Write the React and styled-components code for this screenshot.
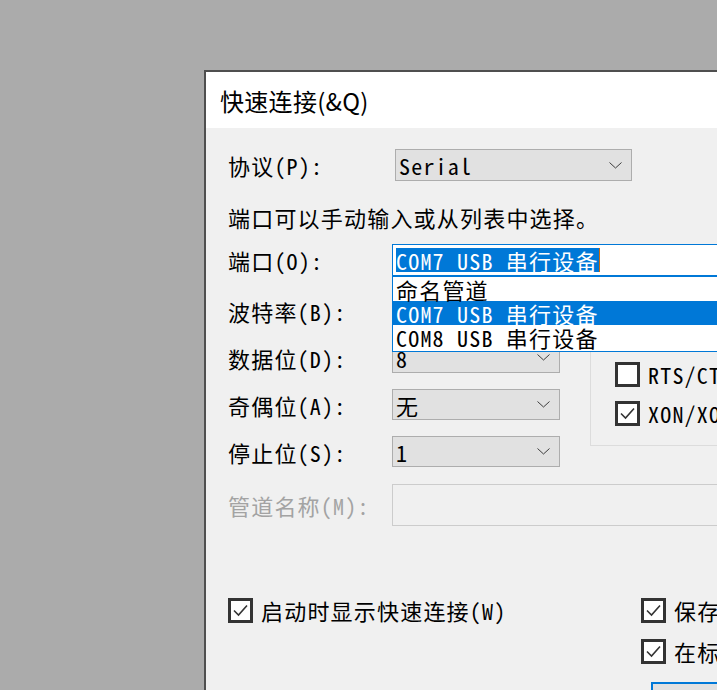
import React from "react";
import styled, { createGlobalStyle } from "styled-components";

const GlobalStyle = createGlobalStyle`
  html, body {
    margin: 0;
    padding: 0;
    background: #ababab;
  }
`;

const FONT = `"Noto Sans Mono CJK SC", "Liberation Mono", "Noto Sans CJK SC", monospace`;

const Page = styled.div`
  width: 717px;
  height: 690px;
  overflow: hidden;
  background: #ababab;
  padding: 70px 0 0 204px;
  box-sizing: border-box;
`;

const Dialog = styled.div`
  width: 620px;
  height: 700px;
  border: 2px solid #4f4f4f;
  background: #f0f0f0;
  font-family: ${FONT};
  font-size: 22px;
  letter-spacing: 1.2px;
  color: #000;
`;

const TitleBar = styled.div`
  height: 56px;
  background: #fff;
  display: flex;
  align-items: center;
  padding-left: 14px;
  font-family: "Noto Sans CJK SC", "Liberation Sans", sans-serif;
  font-size: 24px;
  letter-spacing: 0.3px;
`;

const Body = styled.div`
  display: flex;
  flex-direction: column;
  padding: 21px 0 0 22px;
`;

const FieldRow = styled.div`
  display: flex;
  align-items: center;
  height: ${(p) => p.$h}px;
  margin-top: ${(p) => p.$mt || 0}px;
`;

const Label = styled.div`
  width: 164px;
  flex: none;
  white-space: nowrap;
  color: ${(p) => (p.$disabled ? "#a3a3a3" : "#000")};
`;

const Hint = styled.div`
  height: 30px;
  line-height: 30px;
  margin-top: 21px;
  white-space: nowrap;
`;

const Select = styled.div`
  width: ${(p) => p.$w}px;
  height: ${(p) => p.$h || 31}px;
  margin-left: ${(p) => p.$ml || 0}px;
  box-sizing: border-box;
  background: #e1e1e1;
  border: 1px solid #adadad;
  display: flex;
  align-items: center;
  justify-content: space-between;
  padding: 0 9px 0 3px;
  white-space: nowrap;
`;

const Chevron = () => (
  <svg width="13" height="7" viewBox="0 0 13 7">
    <polyline points="0.5,0.5 6.5,6 12.5,0.5" fill="none" stroke="#3c3c3c" strokeWidth="1" />
  </svg>
);

const Combo = styled.div`
  position: relative;
  z-index: 5;
  flex: 1;
  height: 32px;
  box-sizing: border-box;
  background: #fff;
  border: 1px solid #0078d7;
  display: flex;
  align-items: center;
  padding-left: 3px;
`;

const Selected = styled.span`
  display: inline-block;
  height: 24px;
  line-height: 24px;
  background: #0078d7;
  color: #fff;
  white-space: nowrap;
  border-right: 1px solid #c96a10;
`;

const DropList = styled.div`
  position: absolute;
  top: 31px;
  left: -1px;
  right: -1px;
  background: #fff;
  border: 1px solid #0078d7;
  padding-bottom: 2px;
`;

const ListItem = styled.div`
  height: 24px;
  line-height: 24px;
  padding-left: 3px;
  white-space: nowrap;
  background: ${(p) => (p.$active ? "#0078d7" : "transparent")};
  color: ${(p) => (p.$active ? "#fff" : "#000")};
`;

const Section = styled.div`
  display: flex;
  margin-top: 19px;
`;

const Column = styled.div`
  display: flex;
  flex-direction: column;
  gap: 16px;
  width: 332px;
  flex: none;
`;

const GroupBox = styled.div`
  position: relative;
  flex: 1;
  margin: -9px 0 0 30px;
  height: 160px;
  border: 1px solid #dcdcdc;
  box-sizing: border-box;
  padding: 36px 0 0 24px;
  display: flex;
  flex-direction: column;
  gap: 15px;
`;

const Legend = styled.span`
  position: absolute;
  top: -14px;
  left: 10px;
  padding: 0 4px;
  background: #f0f0f0;
`;

const Check = styled.label`
  display: flex;
  align-items: center;
  gap: 8px;
  height: 24px;
  white-space: nowrap;
`;

const Box = styled.span`
  width: 25px;
  height: 25px;
  flex: none;
  box-sizing: border-box;
  border: 3px solid #333;
  background: #fff;
  display: flex;
  align-items: center;
  justify-content: center;
`;

const CheckBox = ({ checked, children }) => (
  <Check>
    <Box>
      {checked && (
        <svg width="19" height="19" viewBox="0 0 19 19">
          <polyline points="3,9.5 7.5,14 16,4.5" fill="none" stroke="#333" strokeWidth="1.6" />
        </svg>
      )}
    </Box>
    <span>{children}</span>
  </Check>
);

const Input = styled.div`
  flex: 1;
  height: 42px;
  box-sizing: border-box;
  border: 1px solid #cccccc;
  background: #f0f0f0;
`;

const Footer = styled.div`
  display: grid;
  grid-template-columns: 413px auto;
  margin-top: 72px;
`;

const RightChecks = styled.div`
  display: flex;
  flex-direction: column;
  gap: 17px;
`;

const DefaultButton = styled.div`
  width: 130px;
  height: 40px;
  margin: 2px 0 0 10px;
  box-sizing: border-box;
  border: 2px solid #0078d7;
  background: #e1e1e1;
`;

const dataRows = [
  { label: "波特率(B):", value: "115200" },
  { label: "数据位(D):", value: "8" },
  { label: "奇偶位(A):", value: "无" },
  { label: "停止位(S):", value: "1" },
];

export default function App() {
  return (
    <Page>
      <GlobalStyle />
      <Dialog>
        <TitleBar>快速连接(&amp;Q)</TitleBar>
        <Body>
          <FieldRow $h={32}>
            <Label>协议(P):</Label>
            <Select $w={237} $h={32} $ml={3}>
              <span>Serial</span>
              <Chevron />
            </Select>
          </FieldRow>
          <Hint>端口可以手动输入或从列表中选择。</Hint>
          <FieldRow $h={32} $mt={12}>
            <Label>端口(O):</Label>
            <Combo>
              <Selected>COM7 USB 串行设备</Selected>
              <DropList>
                <ListItem>命名管道</ListItem>
                <ListItem $active>COM7 USB 串行设备</ListItem>
                <ListItem>COM8 USB 串行设备</ListItem>
              </DropList>
            </Combo>
          </FieldRow>
          <Section>
            <Column>
              {dataRows.map((r) => (
                <FieldRow key={r.label} $h={31}>
                  <Label>{r.label}</Label>
                  <Select $w={168}>
                    <span>{r.value}</span>
                    <Chevron />
                  </Select>
                </FieldRow>
              ))}
            </Column>
            <GroupBox>
              <Legend>流控</Legend>
              <CheckBox>DTR/DSR</CheckBox>
              <CheckBox>RTS/CTS</CheckBox>
              <CheckBox checked>XON/XOFF</CheckBox>
            </GroupBox>
          </Section>
          <FieldRow $h={42} $mt={17}>
            <Label $disabled>管道名称(M):</Label>
            <Input />
          </FieldRow>
          <Footer>
            <div>
              <CheckBox checked>启动时显示快速连接(W)</CheckBox>
            </div>
            <RightChecks>
              <CheckBox checked>保存会话(V)</CheckBox>
              <CheckBox checked>在标签页中打开(T)</CheckBox>
              <DefaultButton />
            </RightChecks>
          </Footer>
        </Body>
      </Dialog>
    </Page>
  );
}
